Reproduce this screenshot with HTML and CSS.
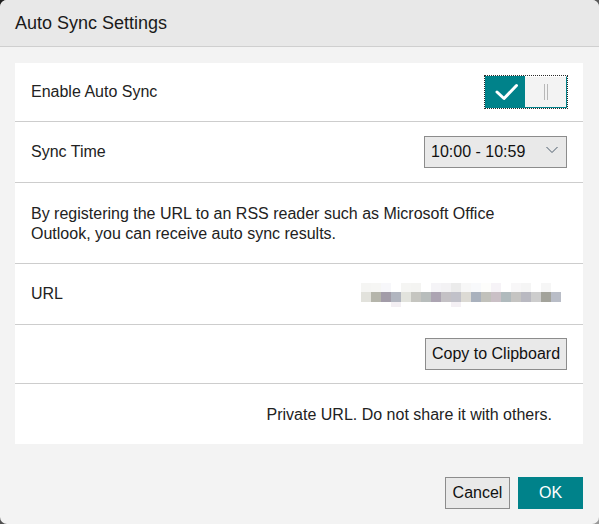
FILE: index.html
```html
<!DOCTYPE html>
<html>
<head>
<meta charset="utf-8">
<link rel="stylesheet" href="styles.css">
</head>
<body>
<div class="dialog">
  <div class="header">Auto Sync Settings</div>
  <div class="content">
    <div class="panel">
      <div class="row row-toggle">
        <span class="label">Enable Auto Sync</span>
        <div class="toggle">
          <div class="toggle-on">
            <svg width="40" height="32" viewBox="0 0 40 32"><path d="M12 16 L19 22.5 L31.5 9.5" fill="none" stroke="#fff" stroke-width="3" stroke-linecap="round" stroke-linejoin="round"/></svg>
          </div>
          <div class="toggle-off"><span class="bar"></span><span class="bar"></span></div>
        </div>
      </div>
      <div class="row row-select">
        <span class="label">Sync Time</span>
        <div class="select">
          <span>10:00 - 10:59</span>
          <svg class="chev" width="12" height="8" viewBox="0 0 12 8"><path d="M0.5 1 L6 6.5 L11.5 1" fill="none" stroke="#4a5a6a" stroke-width="1"/></svg>
        </div>
      </div>
      <div class="row row-text">
        <p class="desc">By registering the URL to an RSS reader such as Microsoft Office Outlook, you can receive auto sync results.</p>
      </div>
      <div class="row row-url">
        <span class="label">URL</span>
        <div class="mosaic">
          <div class="m-top"></div>
          <div class="m-mid"></div>
          <div class="m-bot"></div>
        </div>
      </div>
      <div class="row row-copy">
        <button class="btn copy">Copy to Clipboard</button>
      </div>
      <div class="row row-note">
        <span class="note">Private URL. Do not share it with others.</span>
      </div>
    </div>
  </div>
  <div class="footer">
    <button class="btn cancel">Cancel</button>
    <button class="btn ok">OK</button>
  </div>
</div>
</body>
</html>
```
FILE: styles.css
```css
html, body {
  margin: 0;
  padding: 0;
  width: 599px;
  height: 524px;
  overflow: hidden;
}
body {
  background: linear-gradient(135deg, #1e1e1e 0%, #555 50%, #999 100%);
  font-family: "Liberation Sans", Arial, sans-serif;
  font-size: 16px;
  color: #222;
}
.dialog {
  width: 599px;
  height: 524px;
  box-sizing: border-box;
  background: #f3f3f3;
  border-radius: 7px;
  overflow: hidden;
  display: flex;
  flex-direction: column;
}
.header {
  height: 46px;
  box-sizing: content-box;
  border-bottom: 1px solid #cfcfcf;
  background: #e8e8e8;
  font-size: 18px;
  line-height: 46px;
  padding-left: 15px;
  color: #1a1a1a;
}
.content {
  padding: 16px 16px 0 15px;
}
.panel {
  background: #fff;
}
.row {
  display: flex;
  align-items: center;
  justify-content: space-between;
  padding: 0 15px 0 16px;
  border-bottom: 1px solid #cdcdcd;
  box-sizing: border-box;
}
.row-toggle { height: 59px; }
.row-select { height: 61px; }
.row-text { height: 81px; }
.row-url { height: 61px; }
.row-copy { height: 59px; justify-content: flex-end; padding-right: 16px; }
.row-note { height: 60px; border-bottom: none; justify-content: flex-end; padding-right: 31px; padding-top: 1px; }
.label { line-height: 18px; }

.toggle {
  width: 84px;
  height: 34px;
  box-sizing: border-box;
  border: 1px dotted #2a2a2a;
  display: flex;
}
.toggle-on {
  width: 40px;
  height: 32px;
  background: #00828a;
}
.toggle-on svg { display: block; }
.toggle-off {
  flex: 1;
  background: #f3f3f3;
  border-top: 1px solid #fff;
  border-right: 1px solid #00828a;
  border-bottom: 1px solid #00828a;
  display: flex;
  justify-content: center;
  align-items: center;
  gap: 2px;
}
.bar {
  width: 1px;
  height: 16px;
  background: #b8b8b8;
}

.select {
  width: 143px;
  height: 32px;
  box-sizing: border-box;
  margin-right: 1px;
  border: 1px solid #8c8c8c;
  background: #e9e9e9;
  display: flex;
  align-items: center;
  justify-content: space-between;
  padding: 0 8px 1px 6px;
  color: #111;
}
.chev { display: block; margin-top: -3px; }

.desc {
  margin: 0;
  max-width: 515px;
  line-height: 20px;
  padding-top: 1px;
}

.mosaic {
  width: 200px;
  margin-right: 7px;
  margin-top: 2px;
}
.m-top, .m-mid, .m-bot {
  height: 9px;
}
.m-mid { height: 10px; }
.m-bot { height: 5px; }
.m-top {
  background: linear-gradient(to right,
    #f5f5f3 0 10px, #f6f6f4 10px 20px, #f7f7fa 20px 30px, #fff 30px 40px,
    #f5f5f3 40px 50px, #f4f4f2 50px 60px, #fff 60px 70px, #f5f4f7 70px 80px,
    #f3f2f4 80px 90px, #ebebeb 90px 100px, #f7f7f7 100px 110px, #f8f9fb 110px 120px,
    #fdfdfb 120px 130px, #f6f3f7 130px 140px, #fff 140px 150px, #f8f7f8 150px 160px,
    #f5f5f5 160px 170px, #fff 170px 180px, #f6f6f6 180px 190px, #fff 190px 200px);
}
.m-mid {
  background: linear-gradient(to right,
    #e2e2dc 0 10px, #b5b5ab 10px 20px, #a29ca8 20px 30px, #b1b5bf 30px 40px,
    #e2e3dd 40px 50px, #c5c5c0 50px 60px, #b8bdbc 60px 70px, #aca4b2 70px 80px,
    #c4c1c5 80px 90px, #c1c1c9 90px 100px, #dcdad4 100px 110px, #a9b1bd 110px 120px,
    #c1c1bb 120px 130px, #cac0c6 130px 140px, #b0babd 140px 150px, #c5c4c2 150px 160px,
    #b9b9c1 160px 170px, #cdcdcd 170px 180px, #a3a39b 180px 190px, #b9bdc7 190px 200px);
}
.m-bot {
  background: linear-gradient(to right,
    #fff 0 30px, #f3eff3 30px 40px, #fff 40px 90px, #f4f0f4 90px 100px, #fff 100px 200px);
}

.btn {
  font-family: "Liberation Sans", Arial, sans-serif;
  font-size: 16px;
  height: 32px;
  box-sizing: border-box;
  border: 1px solid #8c8c8c;
  background: #e9e9e9;
  color: #111;
  padding: 0;
  margin: 0;
  border-radius: 0;
}
.copy { width: 142px; }
.note { line-height: 18px; }

.footer {
  display: flex;
  justify-content: flex-end;
  gap: 8px;
  padding: 33px 16px 0 0;
}
.cancel { width: 65px; }
.ok {
  width: 65px;
  background: #00828a;
  border-color: #00828a;
  color: #fff;
}
```
